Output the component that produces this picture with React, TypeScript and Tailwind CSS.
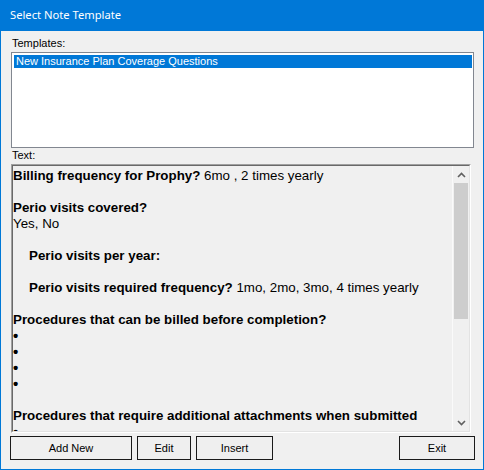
import React from "react";

const sans = "font-['Liberation_Sans',Arial,sans-serif]";

function Line({ children, indent }: { children?: React.ReactNode; indent?: boolean }) {
  return (
    <div className={`h-[16px] leading-[16px] whitespace-nowrap ${indent ? "pl-[16px]" : ""}`}>
      {children}
    </div>
  );
}

function Bullet() {
  return (
    <div className="h-[16px] leading-[16px] text-[15px] font-bold">•</div>
  );
}

function Btn({ label, w }: { label: string; w: string }) {
  return (
    <div
      className={`${w} h-[24px] border border-[#1a1a1a] bg-[#efefef] flex items-center justify-center text-[11px] text-black`}
    >
      {label}
    </div>
  );
}

function Chevron({ up }: { up?: boolean }) {
  return (
    <svg width="9" height="6" viewBox="0 0 9 6">
      <path
        d={up ? "M1 5 L4.5 1.5 L8 5" : "M1 1 L4.5 4.5 L8 1"}
        fill="none"
        stroke="#606060"
        strokeWidth="1.6"
      />
    </svg>
  );
}

export default function App() {
  return (
    <div className={`w-[484px] h-[470px] flex flex-col bg-[#f0f0f0] border border-t-0 border-[#0078d7] ${sans}`}>
      {/* Title bar */}
      <div className="h-[31px] shrink-0 bg-[#0078d7] pl-[9px] flex items-center text-white text-[11.2px] font-['Noto_Sans',sans-serif]">
        Select Note Template
      </div>

      <div className="flex flex-col pt-[6px]">
        <div className="ml-[11px] h-[13px] leading-[13px] text-[11px] text-black">Templates:</div>

        {/* Templates list */}
        <div className="mt-[2px] ml-[10px] w-[463px] h-[96px] border border-[#828790] bg-white pt-[2px] pl-[2px] pr-[1px]">
          <div className="h-[13px] leading-[13px] bg-[#0078d7] text-white text-[11px] pl-[2px] whitespace-nowrap">
            New Insurance Plan Coverage Questions
          </div>
        </div>

        <div className="mt-[1px] ml-[11px] h-[13px] leading-[13px] text-[11px] text-black">Text:</div>

        {/* Text box */}
        <div className="mt-[2px] ml-[10px] w-[460px] h-[269px] border border-t-[#a0a0a0] border-l-[#a0a0a0] border-b-white border-r-white">
          <div className="h-full flex border border-t-[#696969] border-l-[#696969] border-b-[#e3e3e3] border-r-[#e3e3e3]">
            <div className="flex-1 overflow-hidden pt-[2px] text-[13.33px] text-black">
              <Line>
                <b>Billing frequency for Prophy?</b> 6mo , 2 times yearly
              </Line>
              <Line />
              <Line>
                <b>Perio visits covered?</b>
              </Line>
              <Line>Yes, No</Line>
              <Line />
              <Line indent>
                <b>Perio visits per year:</b>
              </Line>
              <Line />
              <Line indent>
                <b>Perio visits required frequency?</b> 1mo, 2mo, 3mo, 4 times yearly
              </Line>
              <Line />
              <Line>
                <b>Procedures that can be billed before completion?</b>
              </Line>
              <Bullet />
              <Bullet />
              <Bullet />
              <Bullet />
              <Line />
              <Line>
                <b>Procedures that require additional attachments when submitted</b>
              </Line>
              <Bullet />
            </div>

            {/* Scrollbar */}
            <div className="w-[17px] shrink-0 flex flex-col bg-[#f0f0f0] border-l border-[#fafafa]">
              <div className="h-[17px] flex items-center justify-center">
                <Chevron up />
              </div>
              <div className="flex-1 px-[1px]">
                <div className="h-[136px] bg-[#cdcdcd]" />
              </div>
              <div className="h-[17px] flex items-center justify-center">
                <Chevron />
              </div>
            </div>
          </div>
        </div>

        {/* Buttons */}
        <div className="mt-[3px] ml-[9px] mr-[8px] flex">
          <Btn label="Add New" w="w-[122px]" />
          <div className="ml-[5px]">
            <Btn label="Edit" w="w-[54px]" />
          </div>
          <div className="ml-[5px]">
            <Btn label="Insert" w="w-[77px]" />
          </div>
          <div className="ml-auto">
            <Btn label="Exit" w="w-[76px]" />
          </div>
        </div>
      </div>
    </div>
  );
}
